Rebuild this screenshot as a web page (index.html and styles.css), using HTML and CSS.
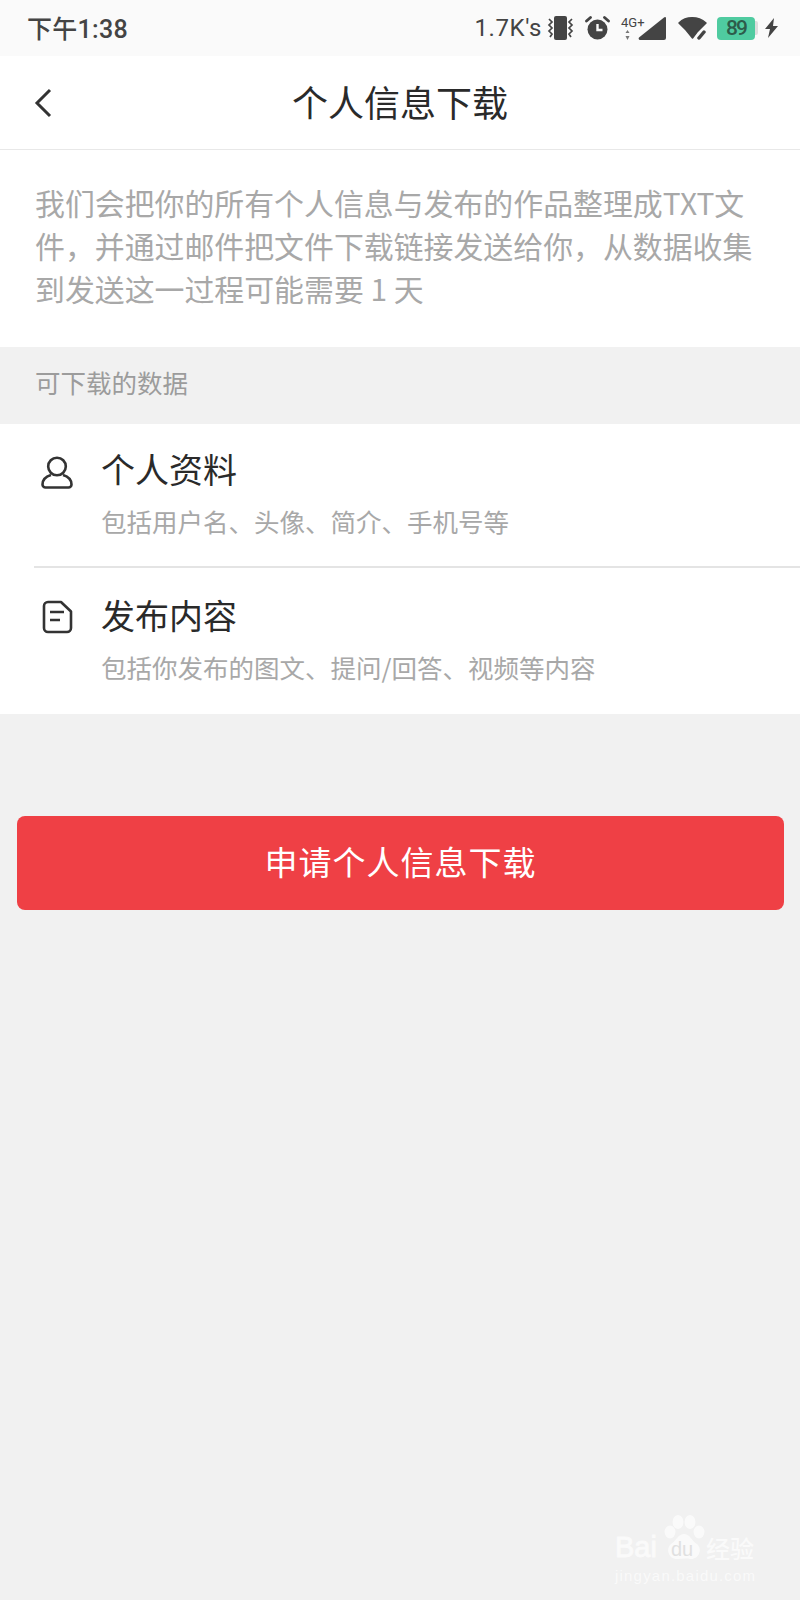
FILE: index.html
```html
<!DOCTYPE html>
<html lang="zh-CN">
<head>
    <meta charset="UTF-8">
    <meta name="viewport" content="width=device-width, initial-scale=1.0">
    <title>个人信息下载</title>
    <link rel="stylesheet" href="styles.css">
</head>
<body>

    <div class="status-bar">
        <span class="status-time">下午1:38</span>
        <div class="status-icons">
            <span class="net-speed">1.7K's</span>
            <!-- vibrate -->
            <svg class="ic-vibrate" width="27" height="24" viewBox="0 0 27 24">
                <rect x="7" y="0" width="13" height="24" rx="2" fill="#444"/>
                <path d="M2 3l3 3-3 3 3 3-3 3 3 3-2 3M25 3l-3 3 3 3-3 3 3 3-3 3 2 3" fill="none" stroke="#444" stroke-width="1.700"/>
            </svg>
            <!-- alarm -->
            <svg class="ic-alarm" width="25" height="24" viewBox="0 0 25 24">
                <circle cx="12.500" cy="13.500" r="10" fill="#444"/>
                <path d="M12.500 8v6h5" fill="none" stroke="#fafafa" stroke-width="2.400"/>
                <path d="M1.500 5l4-3.500M23.500 5l-4-3.500" stroke="#444" stroke-width="2.800" stroke-linecap="round"/>
            </svg>
            <div class="signal">
                <span class="signal-type">4G+</span>
                <svg class="ic-arrows" width="5" height="10" viewBox="0 0 5 10">
                    <path d="M2.500 0l2 3H.5zM.5 6h4l-2 4z" fill="#777"/>
                </svg>
                <svg class="ic-signal" width="28" height="23" viewBox="0 0 28 23">
                    <path d="M27 0a1 1 0 0 1 1 1v20a2 2 0 0 1-2 2H2a1.500 1.500 0 0 1-1-2.500L26 .5z" fill="#444"/>
                </svg>
            </div>
            <!-- wifi -->
            <svg class="ic-wifi" width="29" height="24" viewBox="0 0 29 24">
                <path d="M1 7C8 0 20 0 28 7L22 13 19 16 14.500 22 8 14z" fill="#444" stroke="#444" stroke-width="1.500" stroke-linejoin="round"/>
                <path d="M21 22l5-6" stroke="#444" stroke-width="3.500" stroke-linecap="round"/>
            </svg>
            <div class="battery">
                <span class="battery-level">89</span>
                <span class="battery-cap"></span>
            </div>
            <svg class="ic-bolt" width="13" height="20" viewBox="0 0 13 20">
                <path d="M9 0L0 11h5L3 20l10-12H8z" fill="#444"/>
            </svg>
        </div>
    </div>

    <div class="nav-bar">
        <svg class="back-icon" width="18" height="30" viewBox="0 0 18 30">
            <path d="M16 2L3 15l13 13" fill="none" stroke="#333" stroke-width="3"/>
        </svg>
        <h1 class="nav-title">个人信息下载</h1>
    </div>

    <p class="intro">我们会把你的所有个人信息与发布的作品整理成TXT文件，并通过邮件把文件下载链接发送给你，从数据收集到发送这一过程可能需要 1 天</p>

    <div class="section-label">可下载的数据</div>

    <div class="data-list">
        <div class="data-item">
            <svg class="data-icon" width="34" height="34" viewBox="0 0 34 34">
                <circle cx="17" cy="10.500" r="8.800" fill="none" stroke="#333" stroke-width="2.600"/>
                <path d="M11 19C6 20.500 2.500 24 2.500 28.500a3 3 0 0 0 3 3h23a3 3 0 0 0 3-3C31.500 24 28 20.500 23 19" fill="none" stroke="#333" stroke-width="2.600"/>
            </svg>
            <div class="data-text">
                <div class="data-title">个人资料</div>
                <div class="data-desc">包括用户名、头像、简介、手机号等</div>
            </div>
        </div>
        <div class="data-item">
            <svg class="data-icon" width="34" height="34" viewBox="0 0 34 34">
                <path d="M8 2h13l10 9.500V28a4 4 0 0 1-4 4H8a4 4 0 0 1-4-4V6a4 4 0 0 1 4-4z" fill="none" stroke="#333" stroke-width="2.600" stroke-linejoin="round"/>
                <path d="M10 12h14M10 20h10" stroke="#333" stroke-width="2.600"/>
            </svg>
            <div class="data-text">
                <div class="data-title">发布内容</div>
                <div class="data-desc">包括你发布的图文、提问/回答、视频等内容</div>
            </div>
        </div>
    </div>

    <button class="apply-btn">申请个人信息下载</button>

    <div class="watermark">
        <div class="wm-logo">
            <span class="wm-bai">Bai</span>
            <div class="wm-paw">
                <svg width="44" height="46" viewBox="0 0 44 46">
                    <ellipse cx="8" cy="17" rx="5.500" ry="6.500" fill="#fff"/>
                    <ellipse cx="16" cy="7" rx="5.500" ry="7" fill="#fff"/>
                    <ellipse cx="28" cy="7" rx="5.500" ry="7" fill="#fff"/>
                    <ellipse cx="37" cy="17" rx="5.500" ry="6.500" fill="#fff"/>
                    <path d="M22 19c-6 0-8 7-13 10-6 5-2 16 7 15 4 0 8-1 12 0 9 1 13-10 7-15-5-3-7-10-13-10z" fill="#fff"/>
                </svg>
                <span class="wm-du">du</span>
            </div>
            <span class="wm-jy">经验</span>
        </div>
        <div class="wm-url">jingyan.baidu.com</div>
    </div>

</body>
</html>
```

FILE: styles.css
```css
* {
    box-sizing: border-box;
}

html, body {
    height: 100%;
}

body {
    margin: 0;
    position: relative;
    overflow: hidden;
    background-color: #f1f1f1;
    font-family: "Noto Sans CJK SC", "Noto Sans", sans-serif;
    color: #222;
}

.status-bar {
    height: 56px;
    background-color: #fafafa;
    display: flex;
    align-items: center;
    justify-content: space-between;
    padding: 0 22px 0 27px;
    color: #444;
}

.status-time {
    margin-top: -2px;
    font-family: Roboto, "Noto Sans CJK SC", sans-serif;
    font-size: 25px;
    font-weight: 500;
    letter-spacing: 0.3px;
}

.status-icons {
    display: flex;
    align-items: center;
}

.net-speed {
    margin-right: 5px;
    font-family: Roboto, sans-serif;
    font-size: 24px;
    letter-spacing: 0.6px;
}

.ic-alarm {
    margin-left: 11px;
}

.signal {
    position: relative;
    width: 45px;
    height: 23px;
    margin-left: 11px;
    display: flex;
    align-items: flex-end;
    justify-content: flex-end;
}

.signal-type {
    position: absolute;
    left: 0;
    top: -1px;
    font-family: Roboto, sans-serif;
    font-size: 13px;
    line-height: 14px;
}

.ic-arrows {
    position: absolute;
    left: 4px;
    bottom: 0;
}

.ic-wifi {
    margin-left: 12px;
}

.battery {
    display: flex;
    align-items: center;
    margin-left: 10px;
}

.battery-level {
    width: 38px;
    height: 23px;
    border-radius: 4px;
    background-color: #4fcba0;
    text-align: center;
    font-family: Roboto, sans-serif;
    font-size: 21px;
    line-height: 23px;
    font-weight: 500;
    color: #2d5c4a;
    letter-spacing: -2px;
}

.battery-cap {
    width: 3px;
    height: 14px;
    background-color: #ddd;
    border-radius: 0 2px 2px 0;
}

.ic-bolt {
    margin-left: 7px;
}

.nav-bar {
    position: relative;
    height: 94px;
    padding-bottom: 3px;
    background-color: white;
    border-bottom: 1px solid #e8e8e8;
    display: flex;
    align-items: center;
    justify-content: center;
}

.back-icon {
    position: absolute;
    left: 34px;
    top: 32px;
}

.nav-title {
    margin: 0;
    font-size: 36px;
    font-weight: 400;
    line-height: 50px;
    color: #2a2a2a;
}

.intro {
    margin: 0;
    height: 197px;
    padding: 31px 30px 0 35px;
    background-color: white;
    font-size: 29.900px;
    line-height: 43px;
    color: #a8a8a8;
}

.section-label {
    height: 77px;
    padding: 17px 0 0 35px;
    font-size: 25.500px;
    line-height: 36px;
    color: #9c9c9c;
}

.data-list {
    background-color: white;
    padding-left: 34px;
}

.data-item {
    display: flex;
    align-items: flex-start;
    height: 144px;
    border-bottom: 2px solid #e4e4e4;
}

.data-item:last-child {
    height: 146px;
    border-bottom: none;
}

.data-icon {
    margin: 32px 0 0 6px;
    flex-shrink: 0;
}

.data-text {
    margin: 20px 0 0 27px;
}

.data-item:last-child .data-text {
    margin-top: 22px;
}

.data-title {
    font-size: 34px;
    line-height: 50px;
    color: #2a2a2a;
}

.data-desc {
    margin-top: 7px;
    font-size: 25.500px;
    line-height: 40px;
    color: #a8a8a8;
}

.apply-btn {
    display: block;
    width: 767px;
    height: 94px;
    margin: 102px 0 0 17px;
    padding: 0 0 4px;
    border: none;
    border-radius: 8px;
    background-color: #ef4045;
    color: white;
    font-family: inherit;
    font-size: 33px;
    letter-spacing: 1px;
}

/* baidu watermark, sits over the page corner */
.watermark {
    position: absolute;
    left: 615px;
    top: 1515px;
    width: 150px;
    color: #fff;
    opacity: 0.65;
}

.wm-logo {
    display: flex;
    align-items: flex-end;
    height: 46px;
}

.wm-bai {
    margin-right: 5px;
    font-family: "Liberation Sans", sans-serif;
    font-size: 29px;
    line-height: 27px;
    -webkit-text-stroke: 1px #fff;
}

.wm-paw {
    position: relative;
    width: 44px;
    height: 46px;
    flex-shrink: 0;
}

.wm-paw svg {
    display: block;
}

.wm-du {
    position: absolute;
    left: 9px;
    bottom: 1px;
    font-family: "Liberation Sans", sans-serif;
    font-size: 20px;
    line-height: 22px;
    color: #d8d8d8;
}

.wm-jy {
    font-size: 24px;
    line-height: 26px;
    font-weight: 500;
    white-space: nowrap;
}

.wm-url {
    margin-top: 5px;
    font-family: "Liberation Sans", sans-serif;
    font-size: 15px;
    letter-spacing: 1.200px;
    line-height: 20px;
    white-space: nowrap;
}
```
